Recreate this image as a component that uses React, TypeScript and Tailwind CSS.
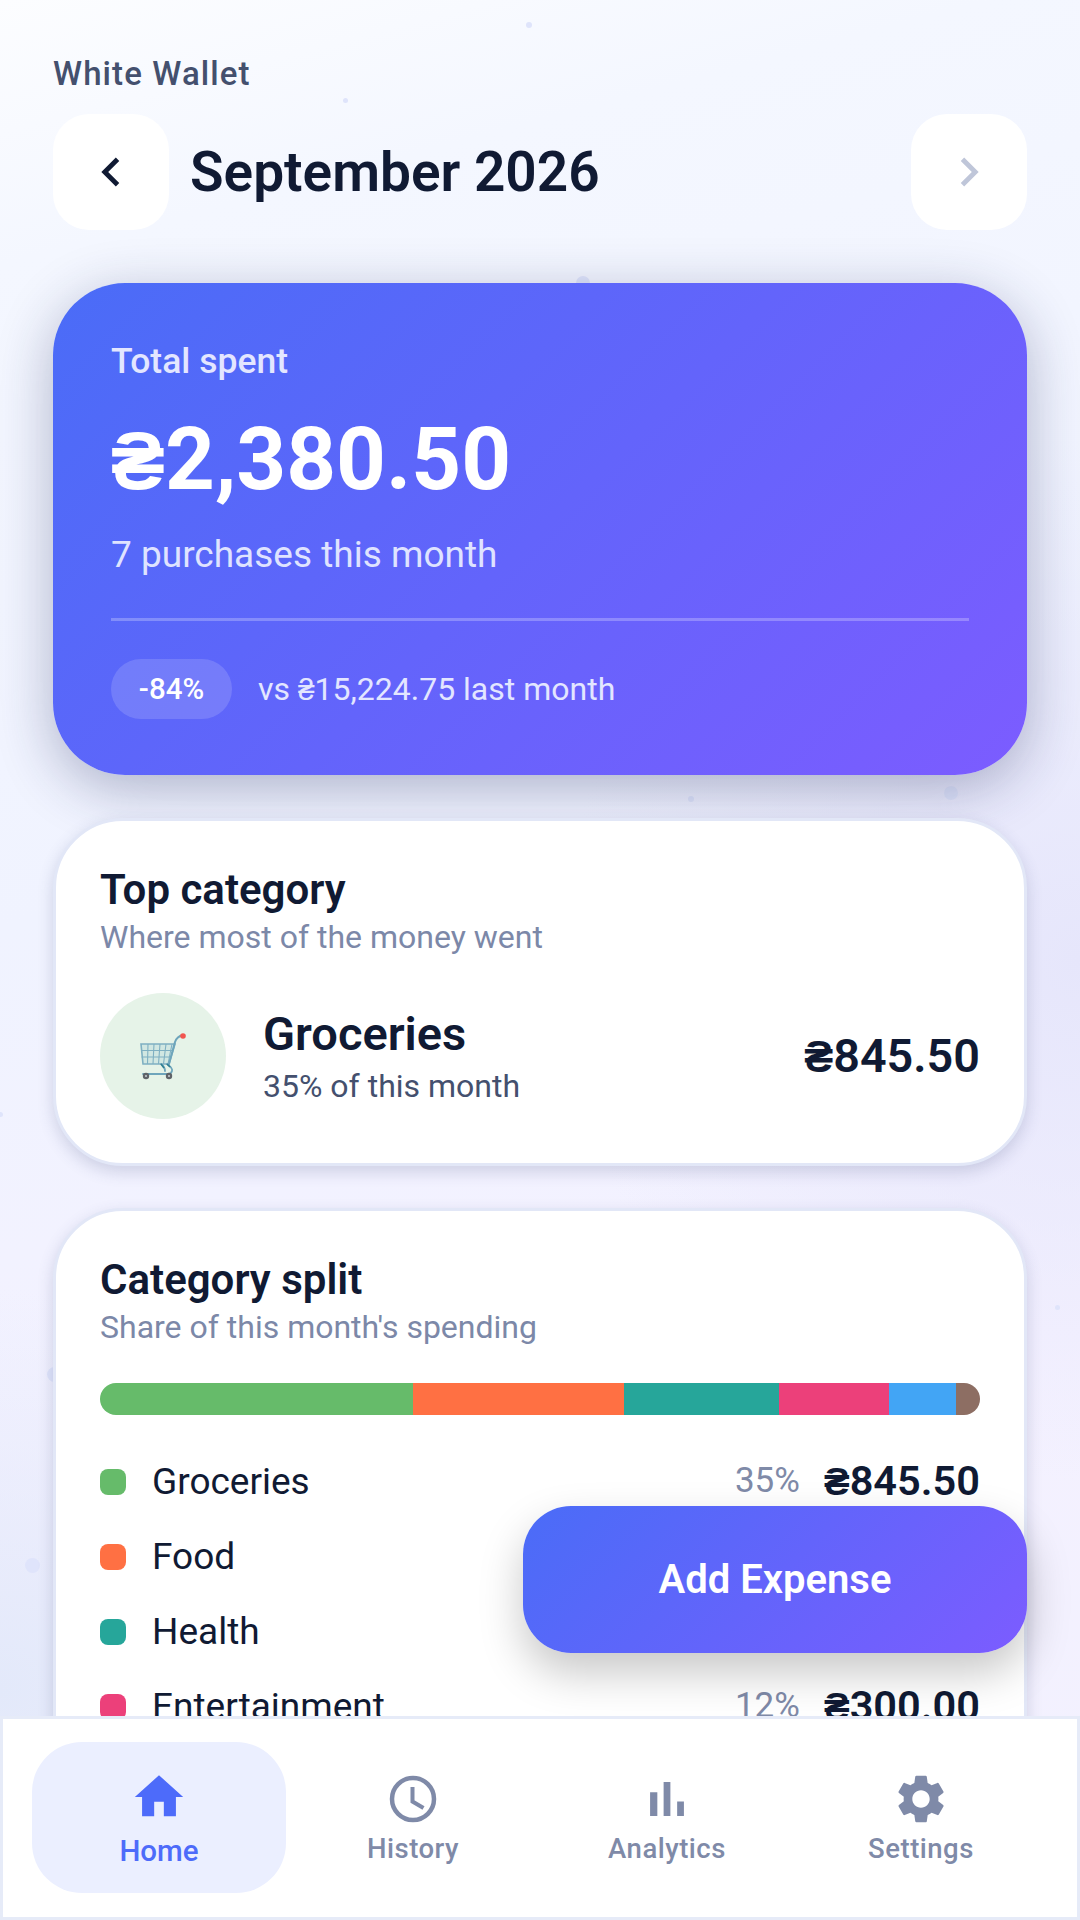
const categories = [
  { name: 'Groceries', amount: 845.5, pct: '35%', swatch: 'bg-[#66bb6a]' },
  { name: 'Food', amount: 571, pct: '24%', swatch: 'bg-[#ff7043]' },
  { name: 'Health', amount: 419, pct: '18%', swatch: 'bg-[#26a69a]' },
  { name: 'Entertainment', amount: 300, pct: '12%', swatch: 'bg-[#ec407a]' },
  { name: 'Transport', amount: 180, pct: '8%', swatch: 'bg-[#42a5f5]' },
  { name: 'Other', amount: 65, pct: '3%', swatch: 'bg-[#8d6e63]' },
];

const total = categories.reduce((sum, c) => sum + c.amount, 0);

const dots = [
  'left-[526px] top-[22px] w-[6px] h-[6px]',
  'left-[343px] top-[98px] w-[5px] h-[5px]',
  'left-[576px] top-[276px] w-[14px] h-[14px]',
  'left-[944px] top-[786px] w-[14px] h-[14px]',
  'left-[688px] top-[796px] w-[6px] h-[6px]',
  'left-[25px] top-[1558px] w-[15px] h-[15px]',
  'left-[47px] top-[1367px] w-[15px] h-[15px]',
  'left-[1055px] top-[1305px] w-[5px] h-[5px]',
  'left-[-2px] top-[1112px] w-[5px] h-[5px]',
];

const money = (n: number) => n.toLocaleString('en-US', { minimumFractionDigits: 2, maximumFractionDigits: 2 });

function Hryvnia() {
  return <span className="[font-family:'Open_Sans',sans-serif] text-[0.93em]">₴</span>;
}

function Icon({ d }: { d: string }) {
  return (
    <svg viewBox="0 0 24 24" className="w-[58px] h-[58px]" fill="currentColor">
      <path d={d} />
    </svg>
  );
}

function ClockIcon() {
  return (
    <svg viewBox="0 0 58 58" className="w-[58px] h-[58px]" fill="none" stroke="currentColor">
      <circle cx="29" cy="29" r="21" strokeWidth="4.5" />
      <path d="M28.5 17v14.5l11 6.5" strokeWidth="4" />
    </svg>
  );
}

function CartIcon() {
  return (
    <svg viewBox="0 0 46 47" className="w-[46px] h-[47px]" fill="none">
      <path d="M1 11h34l-6 20H3z" fill="#a9d0d8" fillOpacity="0.35" stroke="#7fb0c2" strokeWidth="1.6" />
      <path d="M1 17.5h32M1.5 24h29.5M8 11l-.5 20M14 11l-1 20M20 11l-1.5 20M26 11l-2.5 20M32 11l-4 20" stroke="#7fb0c2" strokeWidth="1.1" />
      <path d="M29 31l6-22c1-3 4-6 8-7" stroke="#6ea5bb" strokeWidth="2" strokeLinecap="round" />
      <path d="M21 31c3 2 4 4 4 7M27 31c3 2 6 4 5 7-.5 2-2 3-4 3H3" stroke="#6ea5bb" strokeWidth="1.8" strokeLinecap="round" />
      <path d="M21 31l3 4M27 31l3 3" stroke="#2f7f93" strokeWidth="1.6" />
      <circle cx="43" cy="3" r="2.8" fill="#f2554f" />
      <circle cx="6" cy="43" r="3.2" fill="#5f6368" />
      <circle cx="29" cy="43" r="3.2" fill="#5f6368" />
      <circle cx="6" cy="43" r="1" fill="#c9ced3" />
      <circle cx="29" cy="43" r="1" fill="#c9ced3" />
    </svg>
  );
}

function NavItem({ label, active, icon }: { label: string; active?: boolean; icon: React.ReactNode }) {
  return (
    <div
      className={`flex-1 flex flex-col items-center justify-center rounded-[50px] ${
        active ? 'bg-[#ebefff] text-[#4d6bfa]' : 'text-[#7f8aa8]'
      }`}
    >
      {icon}
      <span
        className={`font-medium ${
          active ? 'mt-[8px] text-[29.5px] leading-[34px]' : 'mt-[4px] text-[27.5px] leading-[34px] tracking-[0.5px]'
        }`}
      >
        {label}
      </span>
    </div>
  );
}

export default function App() {
  return (
    <div className="relative w-[1080px] h-[1920px] overflow-hidden bg-[radial-gradient(circle_at_100%_50%,#e6e6fb_0,transparent_36%),radial-gradient(circle_at_0%_88%,#e3e9fa_0,transparent_20%),linear-gradient(165deg,#fcfdff_0%,#f4f7ff_12%,#f0f3ff_42%,#f4f1ff_72%,#f2f1fe_100%)] [font-family:Roboto,sans-serif]">
      {dots.map((d, i) => (
        <div key={i} className={`absolute rounded-full bg-[#dfe4fb] ${d}`} />
      ))}

      <div className="relative px-[53px] pt-[55px]">
        <div className="text-[33px] leading-[38px] font-medium tracking-[1.1px] text-[#44506e]">White Wallet</div>

        <div className="flex items-center mt-[21px]">
          <button className="w-[116px] h-[116px] rounded-[36px] bg-white flex items-center justify-center text-[#101a33]">
            <Icon d="M15.41 7.41L14 6l-6 6 6 6 1.41-1.41L10.83 12z" />
          </button>
          <h1 className="ml-[21px] flex-1 text-[55px] leading-[60px] font-semibold text-[#101a33]">September 2026</h1>
          <button className="w-[116px] h-[116px] rounded-[36px] bg-white flex items-center justify-center text-[#bfc6d9]">
            <Icon d="M10 6L8.59 7.41 13.17 12l-4.58 4.59L10 18l6-6z" />
          </button>
        </div>

        <section className="mt-[53px] h-[492px] rounded-[72px] px-[58px] pt-[57px] text-white bg-[linear-gradient(135deg,#4a6cf7_0%,#7c5cff_100%)] shadow-[0_14px_56px_rgba(30,40,90,0.32)]">
          <div className="text-[35.5px] leading-[42px] font-medium text-[#e3e6ff]">Total spent</div>
          <div className="mt-[26px] text-[87px] leading-[100px] font-bold">
            <Hryvnia />
            {money(total)}
          </div>
          <div className="mt-[24px] text-[37px] leading-[44px] text-[#dfe3ff]">7 purchases this month</div>
          <div className="mt-[41px] h-[3px] bg-white/25" />
          <div className="flex items-center mt-[38px]">
            <span className="w-[121px] h-[60px] rounded-full bg-white/15 flex items-center justify-center text-[29.5px] font-medium">
              -84%
            </span>
            <span className="ml-[26px] text-[32px] text-[#e3e6ff]">
              vs <Hryvnia />15,224.75 last month
            </span>
          </div>
        </section>

        <section className="mt-[43px] h-[348px] rounded-[70px] bg-white border-[3px] border-[#e2e7f7] px-[44px] pt-[44px] shadow-[0_6px_16px_rgba(60,70,120,0.2)]">
          <h2 className="text-[42px] leading-[50px] font-semibold text-[#101a33]">Top category</h2>
          <p className="text-[32px] leading-[38px] text-[#7c88a8] mt-[3px]">Where most of the money went</p>
          <div className="flex items-center mt-[37px]">
            <div className="w-[126px] h-[126px] rounded-full bg-[#e6f3e8] flex items-center justify-center">
              <CartIcon />
            </div>
            <div className="ml-[37px] flex-1">
              <div className="text-[47px] leading-[54px] font-semibold text-[#101a33]">Groceries</div>
              <div className="text-[32px] leading-[38px] text-[#44506e] mt-[6px]">35% of this month</div>
            </div>
            <div className="text-[46.75px] font-semibold text-[#101a33]">
              <Hryvnia />845.50
            </div>
          </div>
        </section>

        <section className="mt-[42px] h-[900px] rounded-[70px] bg-white border-[3px] border-[#e2e7f7] px-[44px] pt-[44px] shadow-[0_6px_16px_rgba(60,70,120,0.2)]">
          <h2 className="text-[42px] leading-[50px] font-semibold text-[#101a33]">Category split</h2>
          <p className="text-[32px] leading-[38px] text-[#7c88a8] mt-[3px]">Share of this month's spending</p>
          <div className="flex h-[32px] mt-[37px] rounded-full overflow-hidden">
            {categories.map(c => (
              <div key={c.name} className={c.swatch} style={{ width: `${(c.amount / total) * 100}%` }} />
            ))}
          </div>
          <div className="mt-[29px] flex flex-col">
            {categories.map(c => (
              <div key={c.name} className="flex items-center h-[75px]">
                <div className={`w-[26px] h-[26px] rounded-[8px] ${c.swatch}`} />
                <span className="ml-[26px] flex-1 text-[37px] text-[#101a33]">{c.name}</span>
                <span className="text-[35px] text-[#7f8aa8]">{c.pct}</span>
                <span className="ml-[24px] text-[41.5px] font-semibold text-[#101a33]">
                  <Hryvnia />
                  {money(c.amount)}
                </span>
              </div>
            ))}
          </div>
        </section>
      </div>

      <button className="absolute left-[523px] top-[1506px] w-[504px] h-[147px] rounded-[48px] text-white text-[40px] font-semibold bg-[linear-gradient(135deg,#4a6cf7_0%,#7c5cff_100%)] shadow-[0_20px_44px_rgba(0,0,0,0.22)]">
        Add Expense
      </button>

      <nav className="absolute left-0 right-0 bottom-0 h-[204px] bg-white border-[3px] border-[#e6ebf8] px-[29px] pt-[23px] pb-[24px] flex">
        <NavItem label="Home" active icon={<Icon d="M10 20v-6h4v6h5v-8h3L12 3 2 12h3v8z" />} />
        <NavItem label="History" icon={<ClockIcon />} />
        <NavItem label="Analytics" icon={<Icon d="M5 9.2h3V19H5zM10.6 5h2.8v14h-2.8zm5.6 8H19v6h-2.8z" />} />
        <NavItem
          label="Settings"
          icon={
            <Icon d="M19.14 12.94c.04-.3.06-.61.06-.94 0-.32-.02-.64-.07-.94l2.03-1.58c.18-.14.23-.41.12-.61l-1.92-3.32c-.12-.22-.37-.29-.59-.22l-2.39.96c-.5-.38-1.03-.7-1.62-.94l-.36-2.54c-.04-.24-.24-.41-.48-.41h-3.84c-.24 0-.43.17-.47.41l-.36 2.54c-.59.24-1.13.57-1.62.94l-2.39-.96c-.22-.08-.47 0-.59.22L2.74 8.87c-.12.21-.08.47.12.61l2.03 1.58c-.05.3-.07.62-.07.94s.02.64.07.94l-2.03 1.58c-.18.14-.23.41-.12.61l1.92 3.32c.12.22.37.29.59.22l2.39-.96c.5.38 1.03.7 1.62.94l.36 2.54c.05.24.24.41.48.41h3.84c.24 0 .44-.17.47-.41l.36-2.54c.59-.24 1.13-.56 1.62-.94l2.39.96c.22.08.47 0 .59-.22l1.92-3.32c.12-.22.07-.47-.12-.61l-2.01-1.58zM12 15.6c-1.98 0-3.6-1.62-3.6-3.6s1.62-3.6 3.6-3.6 3.6 1.62 3.6 3.6-1.62 3.6-3.6 3.6z" />
          }
        />
      </nav>
    </div>
  );
}
